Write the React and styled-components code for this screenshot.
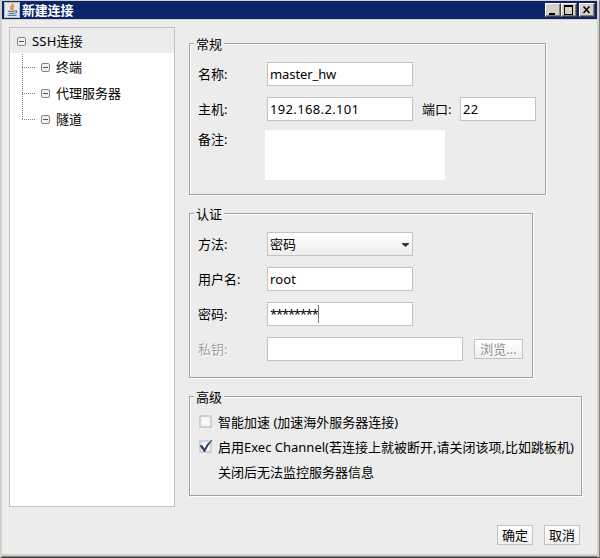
import React from "react";
import styled, { createGlobalStyle } from "styled-components";

const GlobalStyle = createGlobalStyle`
  * { box-sizing: border-box; }
  body {
    margin: 0;
    overflow: hidden;
    background: #d4d0c8;
    color: #000;
    font-family: "Noto Sans", "Noto Sans CJK SC", sans-serif;
    font-size: 13px;
    line-height: 18px;
  }
`;

const Window = styled.div`
  width: 600px;
  height: 558px;
  display: flex;
  flex-direction: column;
  background: #ececec;
  border-style: solid;
  border-width: 1px 1px 1px 2px;
  border-color: #d4d0c8 #808080 #404040 #d4d0c8;
  box-shadow: inset -2px 0 #d4d0c8, inset 0 -1px #808080, inset 0 -3px #d4d0c8;
`;

const TitleBar = styled.div`
  flex: none;
  height: 18px;
  margin-right: 2px;
  padding: 0 2px;
  display: flex;
  align-items: center;
  background: #0a246a;
`;

const TitleText = styled.div`
  flex: 1;
  margin-left: 2px;
  color: #fff;
  font-weight: bold;
  letter-spacing: -0.2px;
  white-space: nowrap;
`;

const CaptionButton = styled.div`
  width: 16px;
  height: 14px;
  margin-left: ${(props) => props.$gap || 0}px;
  background: #d4d0c8;
  border: 1px solid;
  border-color: #fff #404040 #404040 #fff;
  box-shadow: inset -1px -1px #808080;

  svg { display: block; }
`;

const Body = styled.div`
  flex: 1;
  display: flex;
  margin-right: 2px;
  border-top: 1px solid #d4d0c8;
`;

const Tree = styled.div`
  width: 166px;
  height: 480px;
  margin: 7px 14px 0 7px;
  background: #fff;
  border: 1px solid #c3c3c3;
`;

const TreeRow = styled.div`
  height: ${(props) => (props.$root ? 25 : 26)}px;
  margin-bottom: ${(props) => (props.$root ? 1 : 0)}px;
  padding-left: ${(props) => (props.$root ? 7 : 12)}px;
  display: flex;
  align-items: center;
  background: ${(props) => (props.$root ? "#ececec" : "transparent")};
  white-space: nowrap;

  svg { flex: none; }
`;

const ToggleIcon = styled.svg`
  margin-top: ${(props) => (props.$root ? 2 : 1)}px;
`;

const TreeLabel = styled.span`
  margin-left: 6px;
  letter-spacing: ${(props) => props.$spacing || 0}px;
`;

const Content = styled.div`
  flex: 1;
  display: flex;
  flex-direction: column;
  padding-top: 23px;
`;

const GroupBox = styled.div`
  width: ${(props) => props.$width}px;
  height: ${(props) => props.$height}px;
  margin-bottom: 18px;
  border: 1px solid #a0a0a0;
  box-shadow: inset 1px 1px #fff, 1px 1px #fff;
`;

const Legend = styled.div`
  width: 30px;
  height: 18px;
  margin: -9px 0 0 4px;
  padding-left: 2px;
  background: #ececec;
  white-space: nowrap;
`;

const Options = styled.div`
  padding-top: 3px;
`;

const Row = styled.div`
  height: 24px;
  margin-top: ${(props) => props.$gap}px;
  padding-left: 8px;
  display: flex;
  align-items: ${(props) => (props.$top ? "flex-start" : "center")};
`;

const Label = styled.div`
  width: 69px;
  color: ${(props) => (props.$disabled ? "#a3a3a3" : "#000")};
  text-shadow: ${(props) => (props.$disabled ? "1px 1px #fff" : "none")};
  white-space: nowrap;
`;

const PortLabel = styled(Label)`
  width: 38px;
  margin-left: 9px;
`;

const Field = styled.div`
  width: ${(props) => props.$width || 146}px;
  height: 24px;
  padding: 0 3px 0 2px;
  display: flex;
  align-items: center;
  background: #fff;
  border: 1px solid #c3c3c3;
  letter-spacing: ${(props) => props.$spacing || 0}px;
`;

const Select = styled(Field)`
  justify-content: space-between;
  background: linear-gradient(#fff, #ededed);

  svg { margin-top: 2px; }
`;

const Caret = styled.span`
  width: 1px;
  height: 18px;
  background: #777;
`;

const Notes = styled.div`
  width: 180px;
  height: 50px;
  margin-left: -2px;
  background: #fff;
`;

const Button = styled.div`
  width: ${(props) => props.$width || 36}px;
  height: 20px;
  margin-left: 11px;
  display: flex;
  align-items: center;
  justify-content: center;
  background: linear-gradient(#fff, #efefef);
  border: 1px solid #c3c3c3;
  color: ${(props) => (props.$disabled ? "#8c8c8c" : "#000")};
  text-shadow: ${(props) => (props.$disabled ? "1px 1px #fff" : "none")};
  white-space: nowrap;
`;

const Option = styled.div`
  height: 25px;
  padding-left: 9px;
  display: flex;
  align-items: center;
  white-space: nowrap;

  svg { flex: none; }
`;

const OptionText = styled.span`
  margin-left: ${(props) => props.$indent || 5}px;
`;

const Actions = styled.div`
  display: flex;
  margin: 11px 0 0 297px;
`;

function JavaIcon() {
  return (
    <svg width="16" height="16" viewBox="0 0 16 16">
      <rect width="16" height="16" rx="1" fill="#e4e6e8" />
      <rect x=".5" y=".5" width="15" height="15" rx="1" fill="none" stroke="#b9bdc2" />
      <path d="M8.6 1.5c1 2-2.500 2.800-2 4.600.2.8 1.100 1.200 1.100 2M10.300 4c-1.500.7-2.400 1.600-1.500 2.600.5.600.2 1.200-.2 1.600" fill="none" stroke="#ec8328" strokeWidth="1.400" />
      <path d="M4 9.300h6.500M5 11.300h5.500M10.800 9c2.400-.8 2.400 1.500.3 2.300M3.500 13.400h9" fill="none" stroke="#5c7d99" strokeWidth="1.200" />
    </svg>
  );
}

function Toggle({ root }) {
  return (
    <ToggleIcon $root={root} width="9" height="9" viewBox="0 0 9 9">
      <rect x=".5" y=".5" width="8" height="8" rx="1.500" fill="#f1f1f1" stroke="#858585" />
      <path d="M2 4.500h5" stroke="#555" />
    </ToggleIcon>
  );
}

// dotted connector in front of a child node
function Branch({ last }) {
  return (
    <svg width="19" height="26" viewBox="0 0 19 26">
      <path d={last ? "M.5 0v13" : "M.5 0v26"} stroke="#808080" strokeDasharray="1 1" />
      <path d="M0 13.500h13" stroke="#808080" strokeDasharray="1 1" />
    </svg>
  );
}

function Checkbox({ checked }) {
  return (
    <svg width="14" height="15" viewBox="0 0 14 15">
      <rect x="1" y="2" width="11" height="11" fill="#f1f1f1" stroke="#cacaca" strokeWidth="1.600" />
      <rect x="3" y="4" width="7" height="7" fill="#f9f9f9" />
      {checked && (
        <path d="M.5 6.500L3 6l2.500 3.500Q8 4 12.800.800L13.300 1.300Q9 6.500 6 13H5Z" fill="#2b4564" />
      )}
    </svg>
  );
}

function App() {
  return (
    <>
      <GlobalStyle />
      <Window>
        <TitleBar>
          <JavaIcon />
          <TitleText>新建连接</TitleText>
          <CaptionButton>
            <svg width="14" height="12"><path d="M3 9h6v2H3z" /></svg>
          </CaptionButton>
          <CaptionButton>
            <svg width="14" height="12"><path d="M2 1h9v10H2zM3 3v7h7V3z" fillRule="evenodd" /></svg>
          </CaptionButton>
          <CaptionButton $gap={2}>
            <svg width="14" height="12"><path d="M3.500 2.500l6 6.500M9.500 2.500l-6 6.500" stroke="#000" strokeWidth="1.500" /></svg>
          </CaptionButton>
        </TitleBar>
        <Body>
          <Tree>
            <TreeRow $root>
              <Toggle root />
              <TreeLabel $spacing={0.2}>SSH连接</TreeLabel>
            </TreeRow>
            {["终端", "代理服务器", "隧道"].map((name, i) => (
              <TreeRow key={name}>
                <Branch last={i === 2} />
                <Toggle />
                <TreeLabel>{name}</TreeLabel>
              </TreeRow>
            ))}
          </Tree>
          <Content>
            <GroupBox $width={357} $height={152}>
              <Legend>常规</Legend>
              <Row $gap={9}>
                <Label>名称:</Label>
                <Field $spacing={-0.1}>master_hw</Field>
              </Row>
              <Row $gap={11}>
                <Label>主机:</Label>
                <Field $spacing={0.35}>192.168.2.101</Field>
                <PortLabel>端口:</PortLabel>
                <Field $width={76} $spacing={0.3}>22</Field>
              </Row>
              <Row $gap={9} $top>
                <Label>备注:</Label>
                <Notes />
              </Row>
            </GroupBox>
            <GroupBox $width={344} $height={165}>
              <Legend>认证</Legend>
              <Row $gap={9}>
                <Label>方法:</Label>
                <Select>
                  密码
                  <svg width="7" height="4"><path d="M0 0h7v1L3.500 4 0 1z" fill="#333" /></svg>
                </Select>
              </Row>
              <Row $gap={11}>
                <Label>用户名:</Label>
                <Field $spacing={0.1}>root</Field>
              </Row>
              <Row $gap={11}>
                <Label>密码:</Label>
                <Field $spacing={-1.2}>********<Caret /></Field>
              </Row>
              <Row $gap={11}>
                <Label $disabled>私钥:</Label>
                <Field $width={196} />
                <Button $width={49} $disabled>浏览...</Button>
              </Row>
            </GroupBox>
            <GroupBox $width={393} $height={100}>
              <Legend>高级</Legend>
              <Options>
                <Option>
                  <Checkbox />
                  <OptionText>智能加速 (加速海外服务器连接)</OptionText>
                </Option>
                <Option>
                  <Checkbox checked />
                  <OptionText>启用Exec Channel(若连接上就被断开,请关闭该项,比如跳板机)</OptionText>
                </Option>
                <Option>
                  <OptionText $indent={19}>关闭后无法监控服务器信息</OptionText>
                </Option>
              </Options>
            </GroupBox>
            <Actions>
              <Button>确定</Button>
              <Button>取消</Button>
            </Actions>
          </Content>
        </Body>
      </Window>
    </>
  );
}

export default App;
